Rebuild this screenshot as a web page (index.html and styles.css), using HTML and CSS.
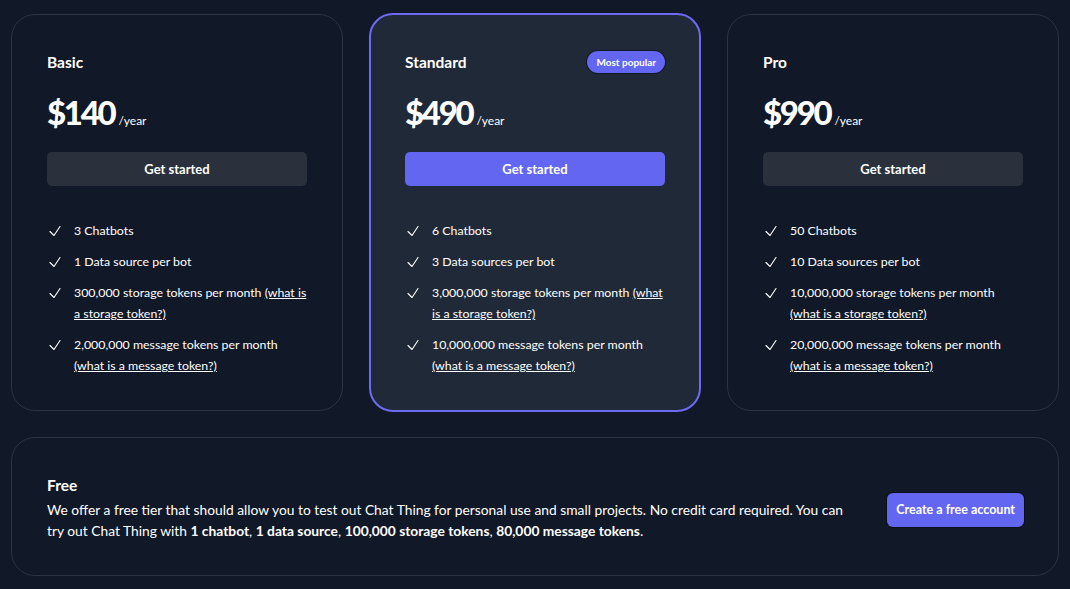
FILE: index.html
```html
<!DOCTYPE html>
<html lang="en">
<head>
    <meta charset="UTF-8">
    <meta name="viewport" content="width=device-width, initial-scale=1.0">
    <title>Pricing</title>
    <link rel="stylesheet" href="styles.css">
</head>
<body>
    <div class="plans">
        <div class="plan">
            <div class="plan-head">
                <h3>Basic</h3>
            </div>
            <div class="price"><span class="amount">$140</span><span class="per">/year</span></div>
            <a href="#" class="btn">Get started</a>
            <ul class="features">
                <li><svg viewBox="0 0 24 24"><path d="M4.5 12.75l6 6 9-13.5"/></svg><span>3 Chatbots</span></li>
                <li><svg viewBox="0 0 24 24"><path d="M4.5 12.75l6 6 9-13.5"/></svg><span>1 Data source per bot</span></li>
                <li><svg viewBox="0 0 24 24"><path d="M4.5 12.75l6 6 9-13.5"/></svg><span>300,000 storage tokens per month <a href="#">(what is a storage token?)</a></span></li>
                <li><svg viewBox="0 0 24 24"><path d="M4.5 12.75l6 6 9-13.5"/></svg><span>2,000,000 message tokens per month <a href="#">(what is a message token?)</a></span></li>
            </ul>
        </div>

        <div class="plan popular">
            <div class="plan-head">
                <h3>Standard</h3>
                <span class="badge">Most popular</span>
            </div>
            <div class="price"><span class="amount">$490</span><span class="per">/year</span></div>
            <a href="#" class="btn primary">Get started</a>
            <ul class="features">
                <li><svg viewBox="0 0 24 24"><path d="M4.5 12.75l6 6 9-13.5"/></svg><span>6 Chatbots</span></li>
                <li><svg viewBox="0 0 24 24"><path d="M4.5 12.75l6 6 9-13.5"/></svg><span>3 Data sources per bot</span></li>
                <li><svg viewBox="0 0 24 24"><path d="M4.5 12.75l6 6 9-13.5"/></svg><span>3,000,000 storage tokens per month <a href="#">(what is a storage token?)</a></span></li>
                <li><svg viewBox="0 0 24 24"><path d="M4.5 12.75l6 6 9-13.5"/></svg><span>10,000,000 message tokens per month <a href="#">(what is a message token?)</a></span></li>
            </ul>
        </div>

        <div class="plan">
            <div class="plan-head">
                <h3>Pro</h3>
            </div>
            <div class="price"><span class="amount">$990</span><span class="per">/year</span></div>
            <a href="#" class="btn">Get started</a>
            <ul class="features">
                <li><svg viewBox="0 0 24 24"><path d="M4.5 12.75l6 6 9-13.5"/></svg><span>50 Chatbots</span></li>
                <li><svg viewBox="0 0 24 24"><path d="M4.5 12.75l6 6 9-13.5"/></svg><span>10 Data sources per bot</span></li>
                <li><svg viewBox="0 0 24 24"><path d="M4.5 12.75l6 6 9-13.5"/></svg><span>10,000,000 storage tokens per month <a href="#">(what is a storage token?)</a></span></li>
                <li><svg viewBox="0 0 24 24"><path d="M4.5 12.75l6 6 9-13.5"/></svg><span>20,000,000 message tokens per month <a href="#">(what is a message token?)</a></span></li>
            </ul>
        </div>
    </div>

    <div class="free">
        <div class="free-text">
            <h3>Free</h3>
            <p>We offer a free tier that should allow you to test out Chat Thing for personal use and small projects. No credit card required. You can try out Chat Thing with <b>1 chatbot</b>, <b>1 data source</b>, <b>100,000 storage tokens</b>, <b>80,000 message tokens</b>.</p>
        </div>
        <a href="#" class="btn primary free-btn">Create a free account</a>
    </div>
</body>
</html>
```

FILE: styles.css
```css
body {
    background-color: #111827;
    color: #ffffff;
    font-family: Lato, "Open Sans", sans-serif;
    margin: 0;
    padding: 13px 11px;
}
.plans {
    display: grid;
    grid-template-columns: repeat(3, 1fr);
    gap: 26px;
    margin-top: 1px;
}
.plan {
    border: 1px solid #2b3443;
    border-radius: 24px;
    padding: 35px 35px 34px;
}
.plan.popular {
    background-color: #1f2937;
    border: 2px solid #6d6af5;
    margin-top: -1px;
    margin-bottom: -1px;
    padding: 35px 34px 34px;
}
.plan-head {
    display: flex;
    justify-content: space-between;
    align-items: center;
    height: 24px;
}
h3 {
    margin: 0;
    font-size: 15.5px;
    font-weight: 700;
}
.badge {
    background-color: #6366f1;
    font-size: 10px;
    font-weight: 700;
    padding: 5px 9px;
    border-radius: 12px;
    box-shadow: 0 0 0 1px #111827;
}
.price {
    margin-top: 18px;
    display: flex;
    align-items: baseline;
    gap: 4px;
    height: 42px;
}
.amount {
    font-size: 33px;
    font-weight: 900;
    letter-spacing: -2.3px;
}
.per {
    font-size: 12px;
}
.btn {
    display: block;
    margin-top: 18px;
    height: 34px;
    line-height: 34px;
    text-align: center;
    background-color: #2a313d;
    color: #ffffff;
    text-decoration: none;
    font-size: 13px;
    font-weight: 700;
    border-radius: 5px;
}
.btn.primary {
    background-color: #6366f1;
}
.features {
    list-style: none;
    margin: 34px 0 0;
    padding: 0;
    display: flex;
    flex-direction: column;
    gap: 10px;
}
.features li {
    display: flex;
    align-items: flex-start;
    gap: 11px;
    font-size: 12.35px;
    line-height: 21px;
}
.features svg {
    flex: none;
    width: 16px;
    height: 16px;
    margin-top: 3px;
    fill: none;
    stroke: #ffffff;
    stroke-width: 1.7;
    stroke-linecap: round;
    stroke-linejoin: round;
}
.features a {
    color: #ffffff;
}
.free {
    margin-top: 26px;
    border: 1px solid #2b3443;
    border-radius: 24px;
    padding: 35px 34px 34px 35px;
    display: flex;
    align-items: center;
    justify-content: space-between;
}
.free-text {
    max-width: 805px;
}
.free p {
    margin: 0;
    font-size: 13.8px;
    line-height: 21px;
}
.free h3 {
    line-height: 24px;
    margin-bottom: 2px;
}
.free-btn {
    margin-top: 6px;
    padding: 0 9px;
    font-size: 12.5px;
    border-radius: 6px;
    box-shadow: 0 0 0 1px #0b0f19;
}
```
